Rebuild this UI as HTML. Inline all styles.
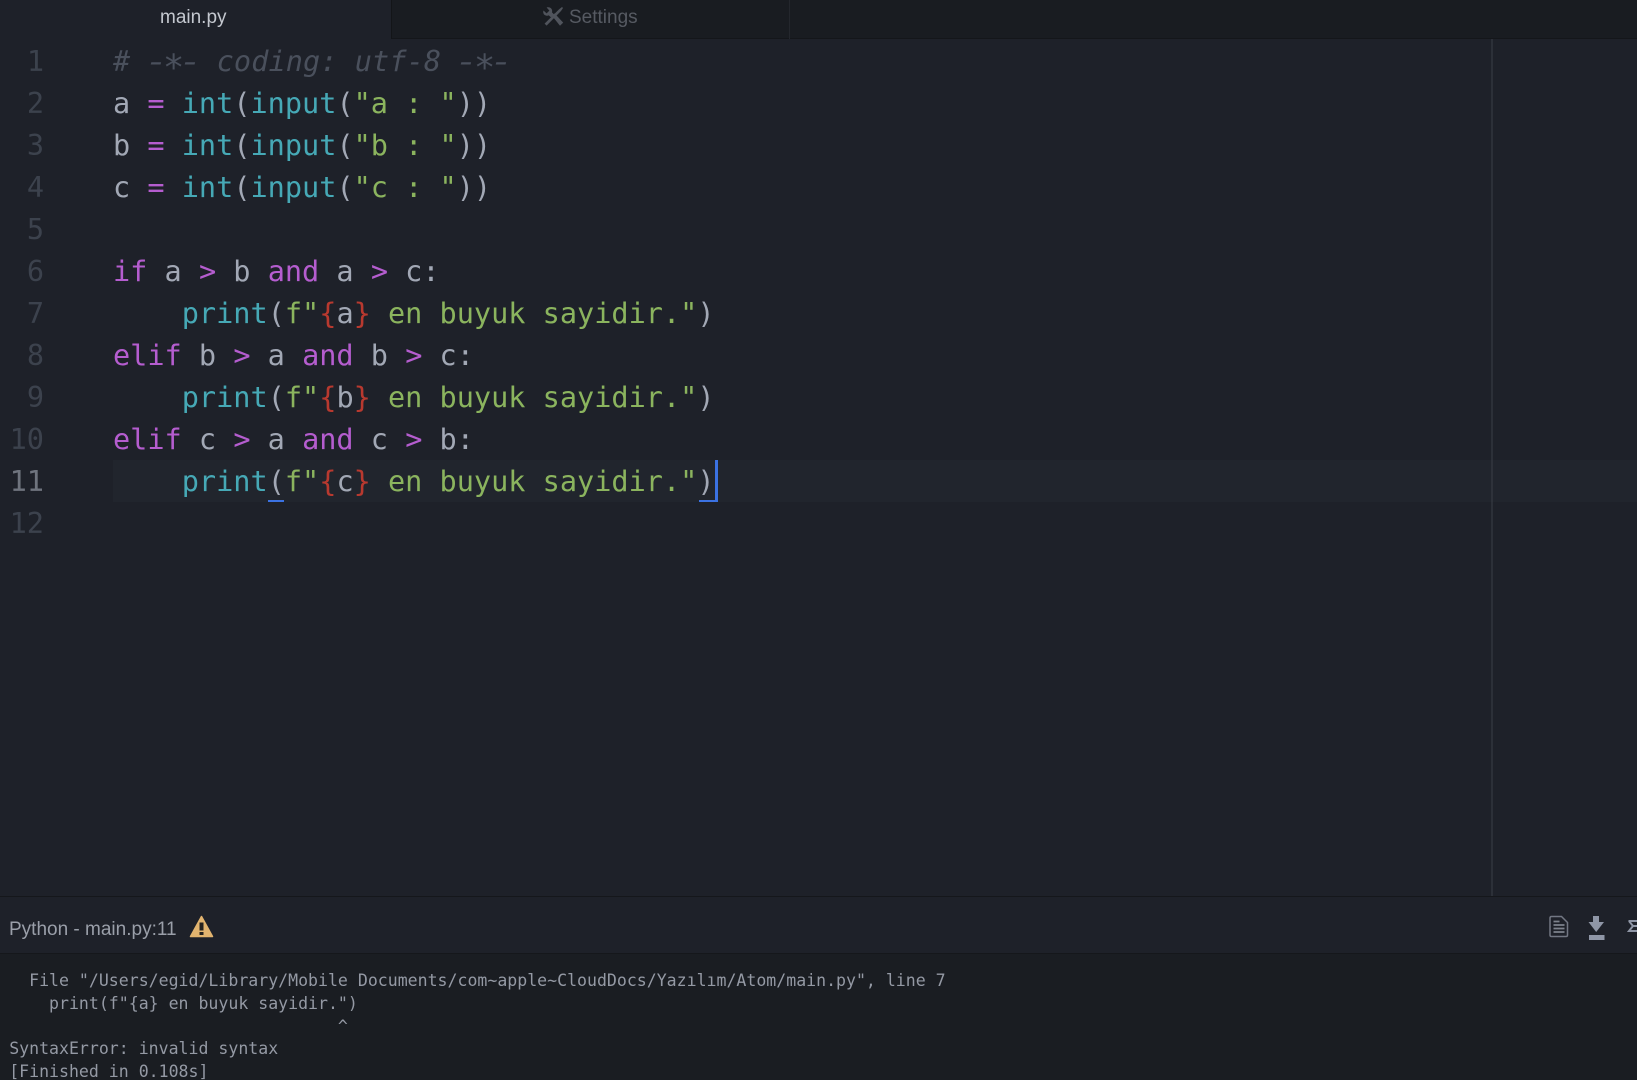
<!DOCTYPE html>
<html>
<head>
<meta charset="utf-8">
<style>
html,body{margin:0;padding:0;background:#1e2129;width:1637px;height:1080px;overflow:hidden}
#root{position:relative;width:1637px;height:1080px;overflow:hidden;background:#1e2129}
.abs{position:absolute}
.tab{font-family:"Liberation Sans",sans-serif;font-size:19px;line-height:34px;white-space:pre}
.line{position:absolute;left:113px;height:42px;line-height:42px;font-family:"DejaVu Sans Mono",monospace;font-size:28.55px;color:#a2a8b5;white-space:pre;filter:blur(.35px)}
.num{position:absolute;left:0;width:44px;text-align:right;height:42px;line-height:42px;font-family:"DejaVu Sans Mono",monospace;font-size:28.55px;color:#3c424d;filter:blur(.35px)}
.k{color:#b55dcf}.f{color:#46a9b6}.s{color:#8bb45e}.r{color:#b8392f}.c{color:#4a505c;font-style:italic;letter-spacing:.08px}
.h{display:inline-block;transform:scaleX(1.35)}
.a{display:inline-block;transform:translateY(6px) scale(1.25)}
.out{position:absolute;font-family:"DejaVu Sans Mono",monospace;font-size:16.56px;line-height:23px;color:#9499a4;white-space:pre;filter:blur(.25px)}
</style>
</head>
<body>
<div id="root">
  <!-- tab bar -->
  <div class="abs" style="left:391px;top:0;width:1246px;height:38px;background:#191c21;border-bottom:1px solid #14161a"></div>
  <div class="abs" style="left:391px;top:0;width:1px;height:39px;background:#131518"></div>
  <div class="abs" style="left:789px;top:0;width:1px;height:39px;background:#24272d"></div>
  <div class="abs tab" style="left:160px;top:1px;color:#c4c8cf">main.py</div>
  <svg class="abs" style="left:542px;top:6px" width="22" height="21" viewBox="0 0 22 21">
    <path d="M1.5 4.5 L4.6 7.4 L7.4 4.6 L4.6 1.5 C8 .4 11 3 10 6.4 L12 8.4 L9 11.4 L6.8 9.4 C3.4 10.6 .2 8 1.5 4.5Z" fill="#50545c"/>
    <path d="M10 9.8 L12.6 7.4 L21.2 16.6 L18 19.8 Z" fill="#50545c"/>
    <path d="M2.6 17.6 L17 3.4 L20 1 L21 2 L19 5 L4.6 19.6 Z" fill="#50545c"/>
  </svg>
  <div class="abs tab" style="left:569px;top:1px;color:#565a62">Settings</div>

  <!-- wrap guide -->
  <div class="abs" style="left:1491px;top:39px;width:2px;height:857px;background:#2c3038"></div>

  <!-- current line -->
  <div class="abs" style="left:113px;top:460px;width:1524px;height:42px;background:#21252d"></div>
  <div class="abs" style="left:1491px;top:460px;width:2px;height:42px;background:#2e323a"></div>

  <!-- gutter -->
  <div class="num" style="top:40px">1</div>
  <div class="num" style="top:82px">2</div>
  <div class="num" style="top:124px">3</div>
  <div class="num" style="top:166px">4</div>
  <div class="num" style="top:208px">5</div>
  <div class="num" style="top:250px">6</div>
  <div class="num" style="top:292px">7</div>
  <div class="num" style="top:334px">8</div>
  <div class="num" style="top:376px">9</div>
  <div class="num" style="top:418px">10</div>
  <div class="num" style="top:460px;color:#6f747e">11</div>
  <div class="num" style="top:502px">12</div>

  <!-- code -->
  <div class="line c" style="top:40px"># <span class="h">-</span><span class="a">*</span><span class="h">-</span> coding: utf-8 <span class="h">-</span><span class="a">*</span><span class="h">-</span></div>
  <div class="line" style="top:82px">a <span class="k">=</span> <span class="f">int</span>(<span class="f">input</span>(<span class="s">"a : "</span>))</div>
  <div class="line" style="top:124px">b <span class="k">=</span> <span class="f">int</span>(<span class="f">input</span>(<span class="s">"b : "</span>))</div>
  <div class="line" style="top:166px">c <span class="k">=</span> <span class="f">int</span>(<span class="f">input</span>(<span class="s">"c : "</span>))</div>
  <div class="line" style="top:250px"><span class="k">if</span> a <span class="k">&gt;</span> b <span class="k">and</span> a <span class="k">&gt;</span> c:</div>
  <div class="line" style="top:292px">    <span class="f">print</span>(<span class="s">f"</span><span class="r">{</span>a<span class="r">}</span><span class="s"> en buyuk sayidir."</span>)</div>
  <div class="line" style="top:334px"><span class="k">elif</span> b <span class="k">&gt;</span> a <span class="k">and</span> b <span class="k">&gt;</span> c:</div>
  <div class="line" style="top:376px">    <span class="f">print</span>(<span class="s">f"</span><span class="r">{</span>b<span class="r">}</span><span class="s"> en buyuk sayidir."</span>)</div>
  <div class="line" style="top:418px"><span class="k">elif</span> c <span class="k">&gt;</span> a <span class="k">and</span> c <span class="k">&gt;</span> b:</div>
  <div class="line" style="top:460px">    <span class="f">print</span>(<span class="s">f"</span><span class="r">{</span>c<span class="r">}</span><span class="s"> en buyuk sayidir."</span>)</div>

  <!-- bracket match + cursor -->
  <div class="abs" style="left:268px;top:500px;width:16px;height:2px;background:#3b72e2"></div>
  <div class="abs" style="left:699px;top:500px;width:18px;height:2px;background:#3b72e2"></div>
  <div class="abs" style="left:715px;top:460px;width:2.5px;height:42px;background:#3b72e2"></div>

  <!-- panel header -->
  <div class="abs" style="left:0;top:896px;width:1637px;height:1px;background:#15171b"></div>
  <div class="abs" style="left:0;top:897px;width:1637px;height:56px;background:#1e2129"></div>
  <div class="abs" style="left:0;top:953px;width:1637px;height:1px;background:#15171b"></div>
  <div class="abs" style="left:9px;top:913px;font-family:'Liberation Sans',sans-serif;font-size:19px;line-height:34px;color:#9a9fa9;white-space:pre">Python - main.py:11</div>
  <svg class="abs" style="left:189px;top:915px" width="25" height="23" viewBox="0 0 25 23">
    <path d="M12.5 1.5 L23.5 21.5 L1.5 21.5 Z" fill="#e2b46f" stroke="#e2b46f" stroke-width="1.5" stroke-linejoin="round"/>
    <rect x="10.5" y="7.5" width="4" height="8" fill="#26231f"/>
    <rect x="10.5" y="17" width="4" height="3" fill="#26231f"/>
  </svg>
  <svg class="abs" style="left:1549px;top:915px" width="20" height="23" viewBox="0 0 20 23">
    <path d="M2.5 1.5 H12.5 L18.5 7.5 V20 Q18.5 21.5 17 21.5 H2.5 Q1 21.5 1 20 V3 Q1 1.5 2.5 1.5Z" fill="none" stroke="#727783" stroke-width="1.5"/>
    <path d="M4.5 6.5 H10.5 M4.5 10 H15.5 M4.5 13.5 H15.5 M4.5 17 H15.5" stroke="#7d828d" stroke-width="1.7"/>
  </svg>
  <svg class="abs" style="left:1588px;top:915px" width="17" height="26" viewBox="0 0 17 26">
    <path d="M5 1 H11 V7 H16 L8.2 17 L0.5 7 H5Z" fill="#8f96a6"/>
    <rect x="1" y="20" width="15.5" height="5" fill="#8f96a6"/>
  </svg>
  <svg class="abs" style="left:1627px;top:918px" width="10" height="16" viewBox="0 0 10 16">
    <path d="M1.5 3 H10 M2 3 L6 8 L2 13 H10" fill="none" stroke="#8f96a6" stroke-width="2"/>
    <path d="M6 8 H10" stroke="#8f96a6" stroke-width="2"/>
  </svg>

  <!-- output -->
  <div class="abs" style="left:0;top:954px;width:1637px;height:126px;background:#1a1d22"></div>
  <div class="out" style="left:9.2px;top:969px">  File "/Users/egid/Library/Mobile Documents/com~apple~CloudDocs/Yazılım/Atom/main.py", line 7</div>
  <div class="out" style="left:9.2px;top:992px">    print(f"{a} en buyuk sayidir.")</div>
  <div class="out" style="left:9.2px;top:1015px">                                 ^</div>
  <div class="out" style="left:9.2px;top:1037px">SyntaxError: invalid syntax</div>
  <div class="out" style="left:9.2px;top:1060px">[Finished in 0.108s]</div>
</div>
</body>
</html>
